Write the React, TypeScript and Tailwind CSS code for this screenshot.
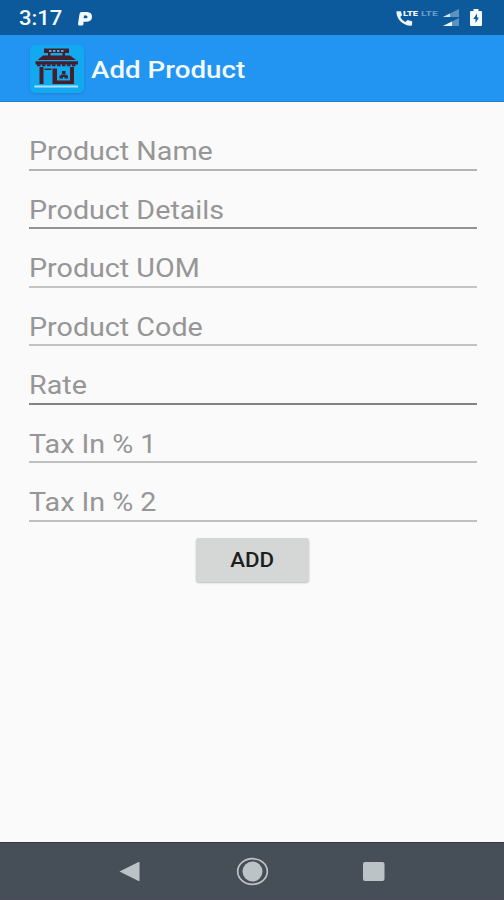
const fields = [
  { label: 'Product Name', line: 'border-[#b4b4b4]' },
  { label: 'Product Details', line: 'border-[#929292]' },
  { label: 'Product UOM', line: 'border-[#c4c4c4]' },
  { label: 'Product Code', line: 'border-[#c2c2c2]' },
  { label: 'Rate', line: 'border-[#838383]' },
  { label: 'Tax In % 1', line: 'border-[#c0c0c0]' },
  { label: 'Tax In % 2', line: 'border-[#c0c0c0]' },
]

function ParkingIcon() {
  return (
    <svg width="15" height="14" viewBox="0 0 15 14">
      <path
        d="M3.500 0H9q5 .3 5 4.800T9 9.800H5.500V12q-.2 1.500-1.700 1.500H1.500Q0 13.500 0 12L1.500 2Q1.800 0 3.500 0zM6 3.500 5.700 6.300h2.500q1.300-.2 1.300-1.400T8.300 3.500z"
        fill="#f3f9fd"
        fillRule="evenodd"
      />
    </svg>
  )
}

function CallIcon() {
  return (
    <svg width="18" height="18" viewBox="0 0 18 18" fill="#eef6fc">
      <path d="M1.200 2.200h3.600l1.300 4-1.900 1.900c1.300 2.300 3 3.900 5.300 5l2-2 4.600 1.200v3.200c0 .8-.6 1.300-1.400 1.200C6.900 16.500.900 10.300.400 3.400c0-.7.300-1.200.800-1.200z" />
    </svg>
  )
}

function SignalIcons() {
  return (
    <svg width="17" height="18" viewBox="0 0 17 18">
      <path d="M0 8 16 0v8z" fill="#5b93c1" />
      <path d="M0 8 7 4.500V8z" fill="#d6e7f3" />
      <path d="M0 17 16 9v8z" fill="#5b93c1" />
      <path d="M0 17 9 12.500V17z" fill="#eaf4fa" />
    </svg>
  )
}

function BatteryIcon() {
  return (
    <svg width="12" height="17" viewBox="0 0 12 17">
      <path d="M3.500 0h5v2H11q1 0 1 1v13q0 1-1 1H1q-1 0-1-1V3q0-1 1-1h2.500z" fill="#f3f9fd" />
      <path d="M7 4.500 3.300 10h2.200v4L8.900 8.500H7z" fill="#0e5a9b" />
    </svg>
  )
}

function ShopLogo() {
  return (
    <svg width="54" height="48" viewBox="0 0 54 48">
      <rect width="54" height="48" rx="5" fill="#12a9f0" />
      {/* sign and roof */}
      <path d="M14 3.500h25v4.500H14z" fill="#43202b" />
      <path d="M19 6h2.500m1.500 0h2.500m1.500 0h2.500m1.500 0h2.500" stroke="#5fa5c9" strokeWidth="1.800" />
      <path d="M18 8h2.500v3H18zM32.500 8H35v3h-2.500z" fill="#43202b" />
      <path d="M13 10.500h27l6 4.500H7.500z" fill="#43202b" />
      {/* awning */}
      <path d="M5.500 16.300H48v3.200H5.500z" fill="#43202b" />
      <path d="M7 20.300h40" stroke="#43202b" strokeWidth="2" strokeDasharray="3.500 1.500" />
      {/* door frame and window */}
      <path d="M9.500 22h4v17h-4zM14.500 23.500h7V25h-7zM22.500 23.500H27V39h-4.500zM40 22h4v17h-4zM23 35.500h21V39H23z" fill="#43202b" />
      <path d="M32 26h3.500v3H32zM29.500 30.500h3.500v3h-3.500zM34.500 30.500H38v3h-3.500zM31 29.500h5.500V32H31z" fill="#43202b" />
      <path d="M4.500 41.500H48" stroke="#a9e7f8" strokeWidth="1.800" />
    </svg>
  )
}

export default function App() {
  return (
    <div className="flex h-[900px] w-[504px] flex-col overflow-hidden bg-[#fafafa] font-[Roboto,sans-serif]">
      <div className="flex h-[35px] shrink-0 items-center bg-[#0c5a9b] pl-[19px] pr-[22px] text-[#f3f9fd]">
        <span className="mt-[3px] w-[59px] origin-left scale-x-[1.13] whitespace-nowrap text-[19.5px] font-medium leading-none">3:17</span>
        <div className="mt-0.5">
          <ParkingIcon />
        </div>
        <div className="ml-auto flex items-center">
          <CallIcon />
          <span className="-ml-[11px] -mt-[8px] w-[18px]">
            <span className="block origin-left scale-x-[1.15] text-[8px] font-black leading-none">LTE</span>
          </span>
          <span className="-mt-[8px] w-[22px]">
            <span className="block origin-left scale-x-[1.3] text-[8px] font-bold leading-none text-[#6b9fc9]">LTE</span>
          </span>
          <SignalIcons />
          <div className="ml-[10px]">
            <BatteryIcon />
          </div>
        </div>
      </div>

      <header className="flex h-[67px] shrink-0 items-center border-b border-[#1c7fd0] bg-[#2294f2] pl-[30px]">
        <div className="mt-[2px] rounded-[5px] shadow-sm">
          <ShopLogo />
        </div>
        <h1 className="ml-[6.500px] mt-1 origin-left scale-x-[1.155] whitespace-nowrap text-[24px] font-medium leading-none text-[#f3faff]">
          Add Product
        </h1>
      </header>

      <main className="flex flex-1 flex-col pl-[29px] pr-[27px] pt-[10.2px]">
        {fields.map((f) => (
          <div key={f.label} className={`flex h-[58.5px] shrink-0 items-end border-b-2 pb-[2.500px] ${f.line}`}>
            <span className="origin-left scale-x-[1.147] whitespace-nowrap text-[25px] leading-[28px] text-[#969696]">
              {f.label}
            </span>
          </div>
        ))}
        <button className="mr-[1.500px] mt-[16.500px] h-[44px] w-[113px] shrink-0 self-center rounded-[3px] bg-[#d5d7d6] pt-[4px] text-[#1d1f1e] shadow-[0_1px_2px_rgba(0,0,0,0.25)]">
          <span className="inline-block scale-x-[1.145] text-[19.5px] font-medium leading-none">ADD</span>
        </button>
      </main>

      <nav className="flex h-[58px] shrink-0 items-center border-t border-b-2 border-t-[#343a42] border-b-[#4b4a58] bg-[#464e57]">
        <svg width="504" height="55" viewBox="0 0 504 55" fill="#bcc3c6">
          <path d="M119.500 28.500 138.500 19q1-.4 1 .6v17.800q0 1-1 .6z" />
          <circle cx="252.500" cy="28.500" r="10" />
          <ellipse cx="252.500" cy="28.500" rx="14.800" ry="12.800" fill="none" stroke="#bcc3c6" strokeWidth="1.700" />
          <rect x="363" y="19" width="21.500" height="19" rx="2" />
        </svg>
      </nav>
    </div>
  )
}
